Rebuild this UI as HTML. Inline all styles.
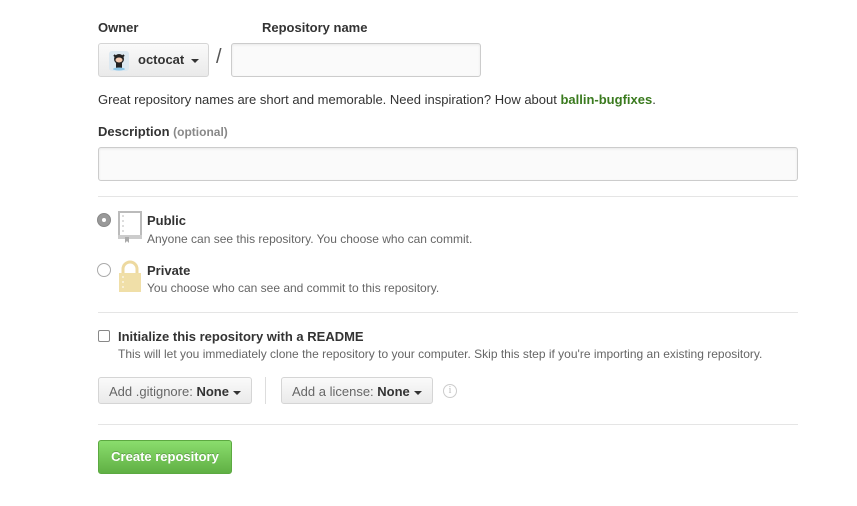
<!DOCTYPE html>
<html><head><style>
*{box-sizing:border-box;margin:0;padding:0}
body{width:857px;height:506px;background:#fff;font-family:"Liberation Sans",Arial,sans-serif;font-size:13px;color:#333;position:relative;overflow:hidden}
.a{position:absolute}
b{font-weight:bold}
.lbl{font-weight:bold;font-size:13px;color:#333}
.btn{position:absolute;border:1px solid #d5d5d5;border-radius:3px;background:linear-gradient(#fafafa,#eaeaea);height:32px}
.inp{position:absolute;border:1px solid #ccc;border-radius:3px;background:#fafafa;box-shadow:inset 0 1px 2px rgba(0,0,0,.075)}
.hr{position:absolute;left:98px;width:700px;height:1px;background:#e5e5e5}
.caret{display:inline-block;width:0;height:0;border-left:4px solid transparent;border-right:4px solid transparent;border-top:4px solid #333;vertical-align:middle;margin-left:4px}
.small{font-size:12px;color:#666}
</style></head><body>
<div class="a lbl" style="left:98px;top:20px">Owner</div>
<div class="a lbl" style="left:262px;top:20px">Repository name</div>
<div class="btn" style="left:98px;top:43px;width:111px;height:34px">
 <div class="a" style="left:10px;top:7px;width:20px;height:20px;border-radius:3px;background:#dde8f0">
  <svg width="20" height="20" viewBox="0 0 20 20"><circle cx="10" cy="8" r="5" fill="#222"/><path d="M5 4l2 2M15 4l-2 2" stroke="#222" stroke-width="2"/><ellipse cx="10" cy="9" rx="3.5" ry="2.5" fill="#f4cbb2"/><rect x="7" y="12" width="6" height="5" fill="#222"/><ellipse cx="10" cy="18" rx="6" ry="1.5" fill="#8cc6e8"/></svg>
 </div>
 <div class="a" style="left:39px;top:8px;font-weight:bold;font-size:13px">octocat<span class="caret" style="margin-left:7px"></span></div>
</div>
<div class="a" style="left:216px;top:46px;font-size:20px;color:#555">/</div>
<div class="inp" style="left:231px;top:43px;width:250px;height:34px"></div>
<div class="a" style="left:98px;top:92px">Great repository names are short and memorable. Need inspiration? How about <b style="color:#3a7a1e">ballin-bugfixes</b>.</div>
<div class="a lbl" style="left:98px;top:124px">Description <span style="color:#888;font-size:12px">(optional)</span></div>
<div class="inp" style="left:98px;top:147px;width:700px;height:34px"></div>
<div class="hr" style="top:196px"></div>
<div class="a" style="left:97px;top:213px;width:14px;height:14px;border-radius:50%;background:#999;border:1px solid #888"><div class="a" style="left:4px;top:4px;width:4px;height:4px;border-radius:50%;background:#fff"></div></div>
<svg class="a" style="left:117px;top:211px" width="26" height="32" viewBox="0 0 26 32"><rect x="2" y="1" width="22" height="26" fill="none" stroke="#bbb" stroke-width="2"/><path d="M6 4v2M6 9v2M6 14v2M6 19v2" stroke="#bbb"/><rect x="1" y="24" width="24" height="4" fill="#ccc"/><path d="M8 26v6l2-2 2 2v-6z" fill="#aaa"/></svg>
<div class="a" style="left:147px;top:213px;font-weight:bold">Public</div>
<div class="a small" style="left:147px;top:232px">Anyone can see this repository. You choose who can commit.</div>
<div class="a" style="left:97px;top:263px;width:14px;height:14px;border-radius:50%;background:#fff;border:1px solid #aaa"></div>
<svg class="a" style="left:117px;top:260px" width="26" height="32" viewBox="0 0 26 32"><path d="M6 14V9a7 7 0 0 1 14 0v5" fill="none" stroke="#edd9a0" stroke-width="3"/><rect x="2" y="13" width="22" height="19" fill="#f0dfa8"/><path d="M6 16v2M6 21v2M6 26v2" stroke="#fff"/></svg>
<div class="a" style="left:147px;top:263px;font-weight:bold">Private</div>
<div class="a small" style="left:147px;top:281px">You choose who can see and commit to this repository.</div>
<div class="hr" style="top:312px"></div>
<div class="a" style="left:98px;top:330px;width:12px;height:12px;border:1px solid #888;border-radius:2px;background:#fff"></div>
<div class="a" style="left:118px;top:329px;font-weight:bold">Initialize this repository with a README</div>
<div class="a small" style="left:118px;top:347px">This will let you immediately clone the repository to your computer. Skip this step if you're importing an existing repository.</div>
<div class="btn" style="left:98px;top:377px;width:154px;height:27px"><div class="a" style="left:10px;top:6px;color:#666">Add .gitignore: <b style="color:#333">None</b><span class="caret"></span></div></div>
<div class="a" style="left:265px;top:377px;width:1px;height:27px;background:#ddd"></div>
<div class="btn" style="left:281px;top:377px;width:152px;height:27px"><div class="a" style="left:10px;top:6px;color:#666">Add a license: <b style="color:#333">None</b><span class="caret"></span></div></div>
<div class="a" style="left:443px;top:384px;width:14px;height:14px;border:1px solid #ccc;border-radius:50%;color:#bbb;font-size:10px;text-align:center;line-height:12px;font-family:'Liberation Serif',serif">i</div>
<div class="hr" style="top:424px"></div>
<div class="a" style="left:98px;top:440px;width:134px;height:34px;border:1px solid #5ca941;border-radius:3px;background:linear-gradient(#8add6d,#60b044);color:#fff;font-weight:bold;text-align:center;line-height:32px;text-shadow:0 -1px 0 rgba(0,0,0,.2)">Create repository</div>
</body></html>
